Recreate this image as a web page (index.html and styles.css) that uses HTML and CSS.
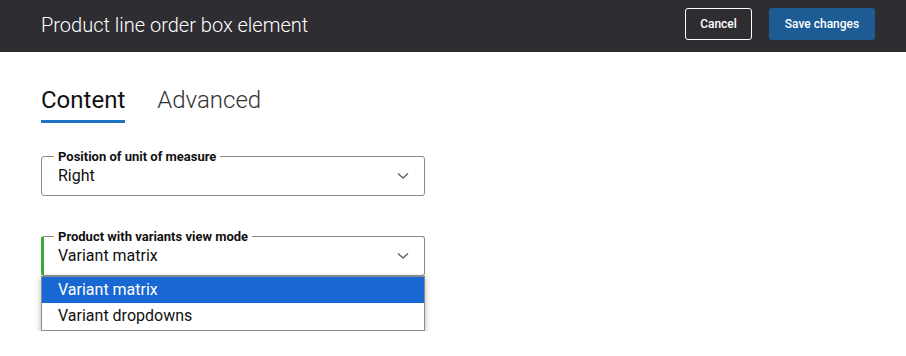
FILE: index.html
```html
<!DOCTYPE html>
<html lang="en">
<head>
    <meta charset="UTF-8">
    <meta name="viewport" content="width=device-width, initial-scale=1.0">
    <title>Product line order box element</title>
    <link rel="stylesheet" href="styles.css">
</head>
<body>
    <header class="topbar">
        <h1 class="title">Product line order box element</h1>
        <div class="actions">
            <button class="btn btn-cancel">Cancel</button>
            <button class="btn btn-save">Save changes</button>
        </div>
    </header>

    <main class="content">
        <nav class="tabs">
            <span class="tab active">Content</span>
            <span class="tab">Advanced</span>
        </nav>

        <fieldset class="field">
            <legend>Position of unit of measure</legend>
            <div class="field-value">
                <span>Right</span>
                <svg class="chevron" width="12" height="8" viewBox="0 0 12 8"><path d="M1 1.5 L6 6 L11 1.5" fill="none" stroke="#666" stroke-width="1.5"/></svg>
            </div>
        </fieldset>

        <div class="select-wrap">
            <fieldset class="field field-open">
                <legend>Product with variants view mode</legend>
                <div class="field-value">
                    <span>Variant matrix</span>
                    <svg class="chevron" width="12" height="8" viewBox="0 0 12 8"><path d="M1 1.5 L6 6 L11 1.5" fill="none" stroke="#666" stroke-width="1.5"/></svg>
                </div>
            </fieldset>
            <!-- open menu of the select -->
            <ul class="dropdown">
                <li class="option selected">Variant matrix</li>
                <li class="option">Variant dropdowns</li>
            </ul>
        </div>
    </main>
</body>
</html>
```

FILE: styles.css
```css
body {
    margin: 0;
    font-family: Roboto, "Liberation Sans", sans-serif;
    background: #ffffff;
    color: #111111;
}

.topbar {
    height: 52px;
    background: #2e2d32;
    display: flex;
    align-items: center;
    justify-content: space-between;
    padding: 0 31px 0 41px;
}

.title {
    margin: 0;
    font-size: 20px;
    font-weight: 300;
    color: #ffffff;
    padding-bottom: 2px;
}

.actions {
    display: flex;
    gap: 17px;
    padding-bottom: 5px;
}

.btn {
    height: 32px;
    font-family: Roboto, "Liberation Sans", sans-serif;
    font-size: 12px;
    font-weight: 500;
    color: #ffffff;
    border-radius: 3px;
    cursor: pointer;
}

.btn-cancel {
    width: 67px;
    background: transparent;
    border: 1px solid #ffffff;
}

.btn-save {
    width: 106px;
    background: #1d5b94;
    border: none;
}

.content {
    padding: 0 41px;
}

.tabs {
    display: flex;
    gap: 32px;
    margin-top: 34px;
}

.tab {
    font-size: 24px;
    line-height: 28px;
    color: #333333;
    font-weight: 300;
    padding-bottom: 6px;
    border-bottom: 3px solid transparent;
}

.tab.active {
    color: #111111;
    font-weight: 400;
    border-bottom-color: #1f72c2;
}

.field {
    width: 384px;
    box-sizing: border-box;
    margin: 26px 0 0 0;
    padding: 0 14px 8px 12px;
    border: 1px solid #8a8a8a;
    border-radius: 3px;
}

.field legend {
    padding: 0 4px;
    font-size: 13px;
    line-height: 15px;
    font-weight: 700;
    color: #111111;
}

.field-value {
    display: flex;
    align-items: center;
    justify-content: space-between;
    padding: 1px 0 0 4px;
    font-size: 16px;
    line-height: 22px;
}

.chevron {
    margin-right: 1px;
}

.select-wrap {
    margin-top: 33px;
}

.select-wrap .field {
    margin-top: 0;
}

.field-open {
    border-left: 3px solid #3aaa35;
    padding-left: 10px;
}

.dropdown {
    width: 384px;
    box-sizing: border-box;
    margin: 0;
    padding: 0 0 1px 0;
    list-style: none;
    background: #ffffff;
    border: 1px solid #8a8a8a;
    box-shadow: 0 2px 6px rgba(0, 0, 0, 0.3);
}

.option {
    height: 26px;
    line-height: 26px;
    padding-left: 16px;
    font-size: 16px;
}

.option.selected {
    background: #1967d2;
    color: #ffffff;
}
```
